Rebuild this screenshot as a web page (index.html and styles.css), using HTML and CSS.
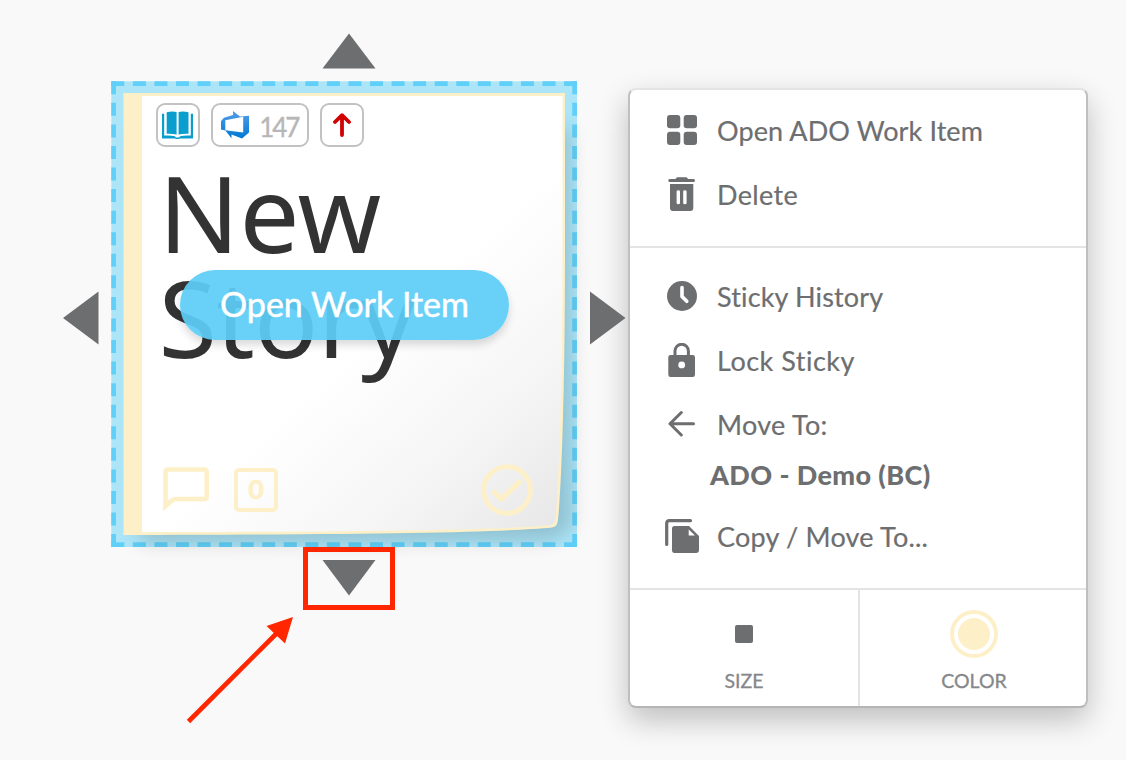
FILE: index.html
```html
<!DOCTYPE html>
<html lang="en">
<head>
<meta charset="utf-8">
<title>Sticky board</title>
<link rel="stylesheet" href="styles.css">
</head>
<body>
<main class="board">
  <svg class="arrow arrow-up" width="54" height="36" viewBox="0 0 54 36"><path d="M27 0.500L53.500 35.500H.5z"/></svg>
  <svg class="arrow arrow-down" width="54" height="36" viewBox="0 0 54 36"><path d="M.5 0H53.500L27 35.500z"/></svg>
  <svg class="arrow arrow-left" width="36" height="54" viewBox="0 0 36 54"><path d="M0 27L35.500.5V53.500z"/></svg>

  <section class="sticky">
    <svg class="paper" width="506" height="506" viewBox="91 61 506 506">
      <defs>
        <linearGradient id="sheet" gradientUnits="userSpaceOnUse" x1="375" y1="330" x2="555" y2="530">
          <stop offset="0" stop-color="#fff"/><stop offset=".55" stop-color="#f5f5f5"/><stop offset="1" stop-color="#e7e7e7"/>
        </linearGradient>
        <filter id="soft" x="-20%" y="-20%" width="140%" height="140%"><feGaussianBlur stdDeviation="10"/></filter>
      </defs>
      <rect x="111.300" y="81.300" width="465.700" height="465.700" fill="#ace5f8"/>
      <g stroke="#60d0f8" stroke-width="4.700" stroke-dasharray="13 8.560">
        <path d="M111.300 83.600H577"/><path d="M111.300 544.700H577"/>
        <path d="M113.600 81.300V547"/><path d="M574.600 81.300V547"/>
      </g>
      <path d="M140 128H569L571 528L552 540L140 543z" fill="#000" opacity=".16" filter="url(#soft)"/>
      <path d="M123.500 93H565V250C565 380 562 470 558.500 515C557.700 524 557 526.500 552 527.500C500 532.500 380 534.500 123.500 535z" fill="#fdf0c8"/>
      <path d="M142 96H562.500V250C562.500 380 559.500 470 556 514C555.300 523 554.500 524.500 550 525.300C500 530 380 531.800 142 532.200z" fill="url(#sheet)"/>
    </svg>
    <header class="badges">
      <span class="badge badge-icon">
        <svg width="31" height="28" viewBox="0 0 31 28" fill="#0a9ecf"><path d="M4.700 1.200Q9.500.2 14.600.9V23.500Q9.500 22.300 4.700 22.800zM16.600.9Q21.700.2 26.500 1.200V22.800Q21.700 22.300 16.600 23.500z"/><path d="M0 2.800H2.200V24.600Q8 24 13 25.300L13.800 26.500H17.200L18 25.300Q23 24 28.800 24.600V2.800H31V27.500H18Q15.500 29 13 27.500H0z"/></svg>
      </span>
      <span class="badge badge-id">
        <svg width="28" height="28" viewBox="0 0 28 28"><defs><linearGradient id="ado" x1="0" y1="1" x2="0" y2="0"><stop stop-color="#0078d4"/><stop offset="1" stop-color="#559de8"/></linearGradient></defs><path fill="url(#ado)" fill-rule="evenodd" d="M28 5V21.500L21 27.500L10.500 23.500V27.300L4.300 19.500L0 18.500V10L3 6.700L12 4V0L19 5.500L28 4.800zM22.200 5.700L4.300 9.300V19.300L22.200 21.500z"/></svg>
        <span class="badge-text">147</span>
      </span>
      <span class="badge badge-icon">
        <svg width="18" height="24" viewBox="0 0 18 24"><path d="M9 22V3M2 9L9 2.200L16 9" fill="none" stroke="#d20000" stroke-width="3.800" stroke-linecap="round" stroke-linejoin="round"/></svg>
      </span>
    </header>
    <h1 class="title">New<br><span class="second">Story</span></h1>
    <button class="open-item">Open Work Item</button>
    <footer class="meta">
      <svg width="47" height="46" viewBox="0 0 47 46"><path d="M2.500 38V5Q2.500 2.500 5 2.500H41.500Q43.700 2.500 43.700 5V29.500Q43.700 32 41.500 32H12.500Q10.500 32 9 33.500z" fill="none" stroke="#fdf0c8" stroke-width="4.600"/><path d="M.2 34V44.500L11 34.500z" fill="#fdf0c8"/></svg>
      <span class="count">0</span>
      <svg class="done" width="52" height="52" viewBox="0 0 52 52" fill="none" stroke="#fdf0c8"><circle cx="26" cy="26" r="23.300" stroke-width="4.800"/><path d="M13.500 28.500L20.300 35L38.500 18" stroke-width="5.400" stroke-linecap="round"/></svg>
    </footer>
  </section>

  <svg class="callout" width="112" height="182" viewBox="185 545 112 182"><path d="M188.500 721.500L279 631" stroke="#ff2600" stroke-width="4.700"/><path d="M293 617L266.500 626L285 643.500z" fill="#ff2600"/></svg>
  <div class="highlight"></div>

  <nav class="menu">
    <div class="group group-top">
      <a class="item"><span class="icon"><svg width="30" height="30" viewBox="0 0 30 30"><rect width="13.300" height="13.300" rx="3"/><rect x="16.700" width="13.300" height="13.300" rx="3"/><rect y="16.700" width="13.300" height="13.300" rx="3"/><rect x="16.700" y="16.700" width="13.300" height="13.300" rx="3"/></svg></span><span class="label w-open">Open ADO Work Item</span></a>
      <a class="item"><span class="icon"><svg width="28" height="34" viewBox="0 0 28 34"><path fill-rule="evenodd" d="M2 7H25.300V31Q25.300 34 22.300 34H5Q2 34 2 31zM8.600 14.500V26Q8.600 27.200 10.300 27.200T12 26V14.500Q12 13.200 10.300 13.200T8.600 14.500zM15.200 14.500V26Q15.200 27.200 16.900 27.200T18.600 26V14.500Q18.600 13.200 16.900 13.200T15.200 14.500z"/><path d="M1.500 2H7.300L9 .3H18.500L20.200 2H25.500Q27 2 27 3.500T25.500 5H1.500Q.3 5 .3 3.500T1.500 2z"/></svg></span><span class="label w-delete">Delete</span></a>
    </div>
    <div class="group group-mid">
      <a class="item"><span class="icon"><svg width="30" height="30" viewBox="0 0 30 30"><circle cx="15" cy="15" r="15"/><path d="M15 6.500V15.500L19.800 20.300" fill="none" stroke="#fff" stroke-width="3.600" stroke-linecap="round" stroke-linejoin="round"/></svg></span><span class="label w-history">Sticky History</span></a>
      <a class="item"><span class="icon"><svg width="28" height="34" viewBox="0 0 28 34"><path d="M7 14V8A6.700 6.700 0 0 1 20.400 8V14" fill="none" stroke="#6d6e70" stroke-width="3"/><path fill-rule="evenodd" d="M2.500 12H24.700Q27 12 27 14.300V31.500Q27 34 24.700 34H2.500Q.3 34 .3 31.500V14.300Q.3 12 2.500 12zM13.700 18.500A3.400 3.400 0 1 0 13.700 25.300A3.400 3.400 0 1 0 13.700 18.500z"/></svg></span><span class="label w-lock">Lock Sticky</span></a>
      <a class="item"><span class="icon"><svg width="28" height="28" viewBox="0 0 28 28"><path d="M13.300 2.500L2 13.800L13.300 25M2 13.800H25.500" fill="none" stroke="#6d6e70" stroke-width="3" stroke-linecap="round" stroke-linejoin="round"/></svg></span><span class="label w-move">Move To:</span></a>
      <a class="target">ADO - Demo (BC)</a>
      <a class="item item-copy"><span class="icon"><svg width="34" height="34" viewBox="0 0 34 34"><path d="M1.700 25.500V4.200Q1.700 1.700 4.200 1.700H25.500" fill="none" stroke="#6d6e70" stroke-width="3.200" stroke-linecap="round"/><path fill-rule="evenodd" d="M9.500 7H24L34 17V31Q34 34 31 34H9.500Q7 34 7 31V9.500Q7 7 9.500 7zM23.700 10.500V16.500H30z"/></svg></span><span class="label w-copy">Copy / Move To...</span></a>
    </div>
    <div class="tools">
      <div class="tool"><span class="tool-icon"><i class="square"></i></span><span class="caption">SIZE</span></div>
      <div class="tool"><span class="tool-icon"><i class="swatch"></i></span><span class="caption">COLOR</span></div>
    </div>
  </nav>
  <svg class="arrow arrow-right" width="36" height="54" viewBox="0 0 36 54"><path d="M0 .5L35.500 27L0 53.500z"/></svg>
</main>
</body>
</html>
```
FILE: styles.css
```css
* { box-sizing: border-box; }
body {
  margin: 0;
  background: #f9f9f9;
  font-family: Lato, "Liberation Sans", sans-serif;
  font-variant-ligatures: none;
  color: #6d6e70;
}
.board { position: relative; width: 1126px; height: 760px; overflow: hidden; }
svg { display: block; flex: none; }

.arrow { position: absolute; fill: #6d6e70; }
.arrow-up { left: 322px; top: 32.500px; }
.arrow-down { left: 322px; top: 560px; }
.arrow-left { left: 63px; top: 291px; }
.arrow-right { left: 590px; top: 291px; }

.sticky {
  position: absolute;
  left: 123px;
  top: 93px;
  width: 442px;
  height: 442px;
  padding: 10px 32px 19px 32.500px;
  display: flex;
  flex-direction: column;
}
.paper { position: absolute; left: -32px; top: -32px; }
.badges { position: relative; display: flex; gap: 11px; }
.badge {
  display: flex;
  align-items: center;
  justify-content: center;
  height: 44px;
  border: 2px solid #c2c2c2;
  border-radius: 9px;
  background: #fff;
}
.badge-icon { width: 44px; }
.badge-id { width: 98.500px; gap: 10px; }
.badge-text { font-size: 26px; color: #b7b7b7; letter-spacing: -2px; line-height: 40px; padding-top: 3px; -webkit-text-stroke: .4px #b7b7b7; }
.title {
  position: relative;
  margin: 12px 0 0 3px;
  font: 400 106.500px/105px "Noto Sans", "Open Sans", sans-serif;
  color: #333;
}
.second { letter-spacing: -.7px; }
.open-item {
  position: absolute;
  left: 57px;
  top: 177px;
  width: 329px;
  height: 70px;
  border: 0;
  border-radius: 35px;
  background: rgba(94, 205, 246, .93);
  box-shadow: 0 5px 8px rgba(0, 0, 0, .15);
  color: #fff;
  font: 400 34px/68px Lato, sans-serif;
  -webkit-text-stroke: .5px #fff;
  white-space: nowrap;
  padding: 0 0 2px;
}
.meta { position: relative; display: flex; align-items: center; margin-top: auto; padding-left: 7.500px; }
.count {
  width: 44px;
  height: 44px;
  margin-left: 24px;
  border: 4px solid #fdf0c8;
  border-radius: 5px;
  color: #fdf0c8;
  font: 900 27px/34px Lato, sans-serif;
  -webkit-text-stroke: .5px #fdf0c8;
  text-align: center;
}
.done { margin-left: auto; }

.callout { position: absolute; left: 185px; top: 545px; }
.highlight { position: absolute; left: 303px; top: 547px; width: 92px; height: 63px; border: 5px solid #ff2600; }

.menu {
  position: absolute;
  left: 628px;
  top: 88px;
  width: 460px;
  height: 620px;
  display: flex;
  flex-direction: column;
  background: #fff;
  border: 2px solid #bfbfbf;
  border-top-color: #e4e4e4;
  border-bottom-color: #b5b5b5;
  border-radius: 8px;
  box-shadow: 0 12px 30px rgba(0, 0, 0, .24);
}
.group { display: flex; flex-direction: column; border-bottom: 2px solid #e4e4e4; padding-left: 32px; }
.group-top { height: 158px; padding-top: 8px; }
.group-mid { height: 342px; padding-top: 16px; }
.item { display: flex; align-items: center; height: 64px; gap: 15px; }
.icon { width: 40px; display: flex; justify-content: center; }
.icon svg { fill: #6d6e70; }
.label { font-size: 27px; line-height: 34px; white-space: nowrap; padding-top: 1px; -webkit-text-stroke: .2px #6d6e70; }
.w-open { letter-spacing: .1px; }
.w-delete { letter-spacing: .35px; }
.w-history { letter-spacing: .15px; }
.w-lock { letter-spacing: .5px; }
.w-move { letter-spacing: .3px; }
.w-copy { letter-spacing: .2px; }
.target { height: 38px; padding-left: 48px; font-size: 27px; line-height: 37px; font-weight: 900; letter-spacing: .4px; white-space: nowrap; }
.item-copy { margin-top: 10px; }
.tools { display: flex; flex: 1; }
.tool { flex: 1; display: flex; flex-direction: column; align-items: center; padding-top: 20px; }
.tool:first-child { flex: 0 0 230px; border-right: 2px solid #e4e4e4; }
.tool:last-child { padding-left: 2px; }
.tool-icon { height: 48px; display: flex; align-items: center; }
.square { width: 18px; height: 18px; border-radius: 2px; background: #6d6e70; }
.swatch { width: 48px; height: 48px; border: 4px solid #fdf0c8; border-radius: 50%; padding: 4px; background: #fdf0c8 content-box; }
.caption { margin-top: 11px; font-size: 19.500px; line-height: 24px; color: #85878a; -webkit-text-stroke: .3px #85878a; }
```
